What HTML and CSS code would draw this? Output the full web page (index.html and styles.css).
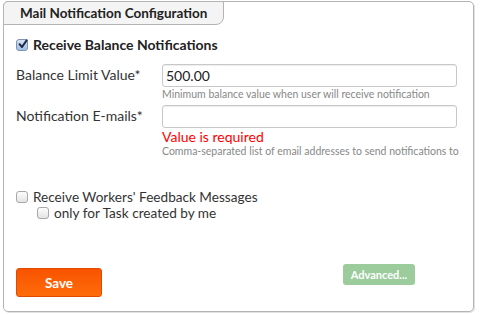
FILE: index.html
```html
<!DOCTYPE html>
<html>
<head>
<meta charset="utf-8">
<link rel="stylesheet" href="styles.css">
</head>
<body>
<div class="panel">
  <div class="tab">Mail Notification Configuration</div>
  <div class="content">
    <label class="check-row main-check">
      <span class="cb checked"><svg viewBox="0 0 12 12" width="12" height="12"><path d="M2.5 6.2 L5 9 L9.8 2.2" fill="none" stroke="#1d2a44" stroke-width="2" stroke-linecap="round" stroke-linejoin="round"/></svg></span>
      <span>Receive Balance Notifications</span>
    </label>
    <div class="field">
      <div class="label">Balance Limit Value*</div>
      <div class="control">
        <div class="input">500.00</div>
        <div class="help">Minimum balance value when user will receive notification</div>
      </div>
    </div>
    <div class="field">
      <div class="label">Notification E-mails*</div>
      <div class="control">
        <div class="input"></div>
        <div class="error">Value is required</div>
        <div class="help">Comma-separated list of email addresses to send notifications to</div>
      </div>
    </div>
    <label class="check-row workers">
      <span class="cb"></span>
      <span>Receive Workers' Feedback Messages</span>
    </label>
    <label class="check-row sub">
      <span class="cb"></span>
      <span>only for Task created by me</span>
    </label>
    <div class="actions">
      <button class="btn save">Save</button>
      <button class="btn advanced">Advanced...</button>
    </div>
  </div>
</div>
</body>
</html>
```

FILE: styles.css
```css
* { box-sizing: border-box; }
html, body { margin: 0; padding: 0; background: #fff; }
body {
  width: 480px;
  height: 315px;
  font-family: Lato, "Liberation Sans", sans-serif;
  color: #333;
  padding: 1px 0 0 3px;
}
.panel {
  width: 471px;
  height: 311px;
  border: 1px solid #b4b4b4;
  border-radius: 5px;
  box-shadow: 1px 1px 0 #e2e2e2;
}
.tab {
  width: 221px;
  height: 24px;
  margin: -1px 0 0 -1px;
  background: #f4f4f4;
  border: 1px solid #b4b4b4;
  border-radius: 5px 0 8px 0;
  font-weight: bold;
  font-size: 13.5px;
  color: #222;
  padding: 3px 0 0 16px;
  line-height: 16px;
}
.content {
  padding: 0 0 0 12px;
}
.check-row {
  display: flex;
  align-items: center;
  font-size: 14px;
  line-height: 16px;
}
.main-check {
  margin-top: 12px;
  font-weight: bold;
  color: #222;
}
.cb {
  width: 12px;
  height: 12px;
  border: 1px solid #a8a8a8;
  border-radius: 3px;
  background: linear-gradient(#fdfdfd, #e4e4e4);
  margin-right: 5px;
  display: inline-flex;
  flex: none;
}
.cb.checked {
  background: linear-gradient(#d6e4f6, #9fbde6);
  border-color: #7f93b3;
}
.cb.checked svg { margin: -2px 0 0 0; overflow: visible; }
.field {
  display: flex;
  margin-top: 11px;
}
.field + .field { margin-top: 4px; }
.label {
  width: 146px;
  flex: none;
  font-size: 14px;
  padding-top: 3px;
  line-height: 16px;
}
.control { width: 295px; }
.input {
  height: 23px;
  border: 1px solid #c8c8c8;
  border-radius: 3px;
  box-shadow: inset 0 1px 1px #eee;
  font-size: 14px;
  line-height: 19px;
  padding: 1px 3px;
  color: #222;
}
.help {
  font-size: 10.5px;
  color: #888;
  line-height: 13px;
  margin-top: 1px;
  white-space: nowrap;
}
.error {
  color: #f00;
  font-size: 14px;
  line-height: 15px;
  margin-top: 1px;
}
.workers { margin-top: 31px; font-size: 13.6px; }
.sub { margin-top: 0; padding-left: 21px; font-size: 13.6px; }
.actions {
  display: flex;
  align-items: flex-start;
  margin-top: 47px;
}
.btn {
  border: none;
  font-family: inherit;
  font-weight: bold;
  color: #fff;
}
.save {
  width: 86px;
  height: 29px;
  border-radius: 3px;
  background: linear-gradient(#f85300, #ff6c0a);
  border: 1px solid #e04a00;
  font-size: 13.5px;
}
.advanced {
  margin: -4px 0 0 241px;
  width: 72px;
  height: 21px;
  border-radius: 3px;
  background: #9ccc9c;
  font-size: 11px;
  padding: 0;
}
```
